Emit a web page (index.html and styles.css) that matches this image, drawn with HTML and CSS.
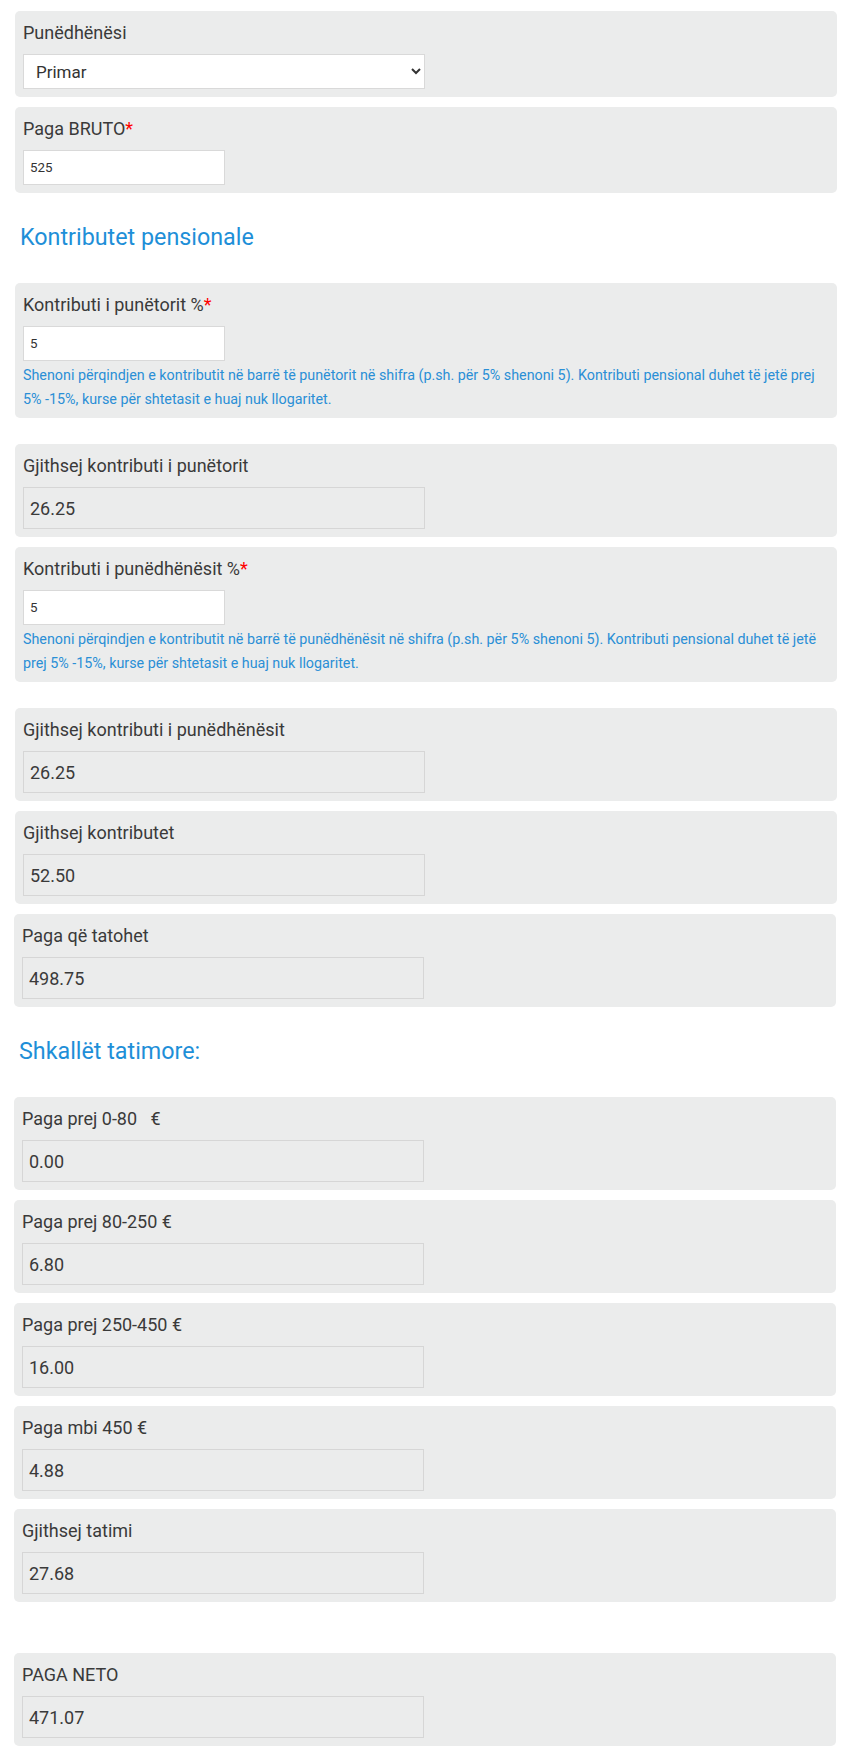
FILE: index.html
```html
<!DOCTYPE html>
<html lang="sq">
<head>
  <meta charset="UTF-8">
  <meta name="viewport" content="width=device-width, initial-scale=1">
  <title>Kalkulatori i pagës</title>
  <link rel="stylesheet" href="styles.css">
</head>
<body>
  <div class="calc">
    <div class="field-box">
      <label for="employer">Punëdhënësi</label>
      <select id="employer" class="select">
        <option value="primar">Primar</option>
        <option value="sekondar">Sekondar</option>
      </select>
    </div>

    <div class="field-box">
      <label for="gross">Paga BRUTO<span class="req">*</span></label>
      <input type="text" id="gross" class="input" value="525">
    </div>

    <h3 class="section-title">Kontributet pensionale</h3>

    <div class="field-box">
      <label for="emp-pct">Kontributi i punëtorit %<span class="req">*</span></label>
      <input type="text" id="emp-pct" class="input" value="5">
      <p class="help">Shenoni përqindjen e kontributit në barrë të punëtorit në shifra (p.sh. për 5% shenoni 5). Kontributi pensional duhet të jetë prej 5% -15%, kurse për shtetasit e huaj nuk llogaritet.</p>
    </div>

    <div class="field-box spaced">
      <label>Gjithsej kontributi i punëtorit</label>
      <input type="text" class="result" value="26.25" readonly>
    </div>

    <div class="field-box">
      <label for="boss-pct">Kontributi i punëdhënësit %<span class="req">*</span></label>
      <input type="text" id="boss-pct" class="input" value="5">
      <p class="help">Shenoni përqindjen e kontributit në barrë të punëdhënësit në shifra (p.sh. për 5% shenoni 5). Kontributi pensional duhet të jetë prej 5% -15%, kurse për shtetasit e huaj nuk llogaritet.</p>
    </div>

    <div class="field-box spaced">
      <label>Gjithsej kontributi i punëdhënësit</label>
      <input type="text" class="result" value="26.25" readonly>
    </div>

    <div class="field-box">
      <label>Gjithsej kontributet</label>
      <input type="text" class="result" value="52.50" readonly>
    </div>

    <div class="tax-part">
      <div class="field-box">
        <label>Paga që tatohet</label>
        <input type="text" class="result" value="498.75" readonly>
      </div>

      <h3 class="section-title">Shkallët tatimore:</h3>

      <div class="field-box">
        <label>Paga prej 0-80 &nbsp; €</label>
        <input type="text" class="result" value="0.00" readonly>
      </div>

      <div class="field-box">
        <label>Paga prej 80-250 €</label>
        <input type="text" class="result" value="6.80" readonly>
      </div>

      <div class="field-box">
        <label>Paga prej 250-450 €</label>
        <input type="text" class="result" value="16.00" readonly>
      </div>

      <div class="field-box">
        <label>Paga mbi 450 €</label>
        <input type="text" class="result" value="4.88" readonly>
      </div>

      <div class="field-box">
        <label>Gjithsej tatimi</label>
        <input type="text" class="result" value="27.68" readonly>
      </div>

      <div class="field-box net">
        <label>PAGA NETO</label>
        <input type="text" class="result" value="471.07" readonly>
      </div>
    </div>
  </div>
</body>
</html>
```

FILE: styles.css
```css
body { margin: 0; font-family: Roboto, "Liberation Sans", sans-serif; color: #3a3a3a; background: #fff; }
.calc { padding: 11px 9px 0 15px; }
.field-box { background: #ebecec; border-radius: 5px; padding: 10px 8px 8px 8px; margin-bottom: 10px; }
.field-box label { display: block; font-size: 18px; line-height: 24px; margin-bottom: 9px; }
.field-box.spaced { margin-top: 26px; }
.field-box.net { margin-top: 51px; }
.req { color: #ff0000; }
.select { display: block; box-sizing: border-box; width: 402px; height: 35px; padding: 0 6px 0 8px; border: 1px solid #d9d9d9; border-radius: 0; background: #fff; font-family: inherit; font-size: 17px; color: #333; }
.input { display: block; box-sizing: border-box; width: 202px; height: 35px; padding: 0 6px; border: 1px solid #d9d9d9; background: #fff; font-family: inherit; font-size: 13.33px; color: #333; }
.result { display: block; box-sizing: border-box; width: 402px; height: 42px; padding: 0 6px; border: 1px solid #d6d6d6; background: transparent; font-family: inherit; font-size: 18px; color: #3a3a3a; }
.help { margin: 2px 0 -1px 0; font-size: 14.3px; line-height: 24px; color: #2a8fd6; }
.section-title { margin: 29px 0 31px 5px; font-size: 23.3px; line-height: 30px; font-weight: normal; color: #1e8fd8; }
.tax-part { margin-left: -1px; margin-right: 1px; }
```
